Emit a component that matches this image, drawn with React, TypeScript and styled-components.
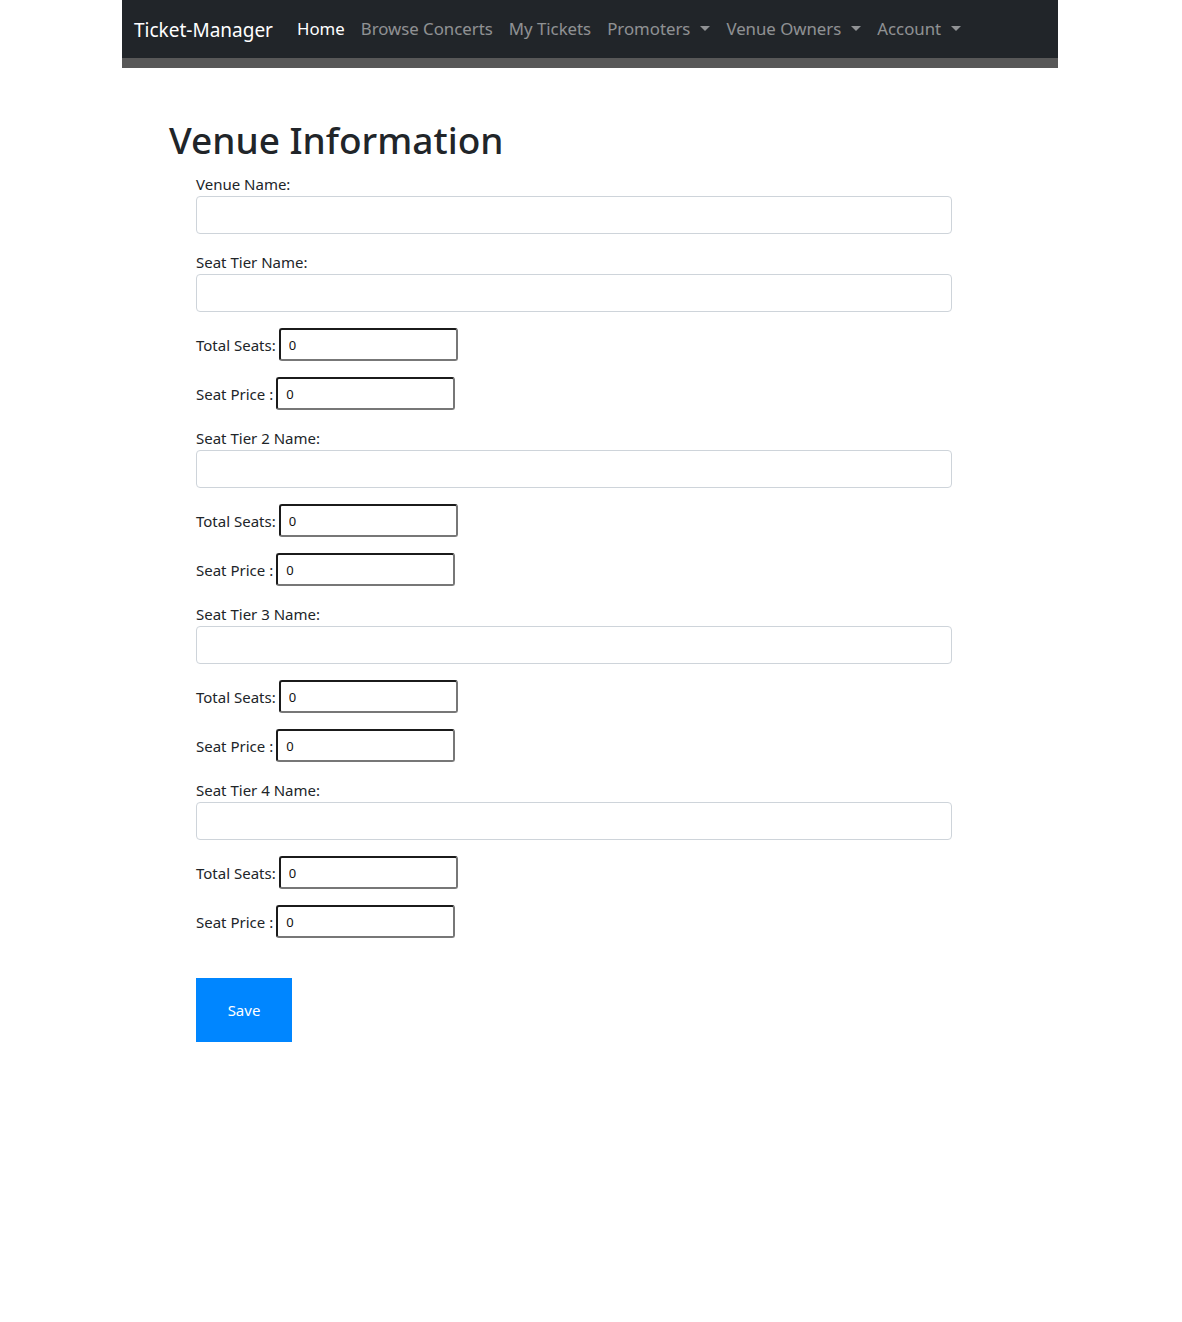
import React from "react";
import styled, { createGlobalStyle } from "styled-components";

const GlobalStyle = createGlobalStyle`
  html, body {
    margin: 0;
    padding: 0;
    background: #fff;
  }
  body {
    font-family: "Noto Sans", "Open Sans", sans-serif;
    color: #212529;
  }
`;

const Page = styled.div`
  width: 936px;
  margin-left: 122px;
  min-height: 1322px;
`;

const Navbar = styled.nav`
  background-color: #212529;
  height: 58px;
  display: flex;
  align-items: center;
  padding: 0 12px;
  border-bottom: 10px solid #585858;
`;

const Brand = styled.a`
  color: #fff;
  font-size: 19px;
  margin-right: 24px;
  text-decoration: none;
  padding-top: 2px;
`;

const NavList = styled.ul`
  display: flex;
  list-style: none;
  margin: 0 0 2px;
  padding: 0;
  gap: 16px;
`;

const NavLink = styled.a<{ active?: boolean; dropdown?: boolean }>`
  font-size: 16.8px;
  color: ${(p) => (p.active ? "#fff" : "rgba(255, 255, 255, 0.5)")};
  text-decoration: none;
  cursor: pointer;

  &::after {
    display: ${(p) => (p.dropdown ? "inline-block" : "none")};
    content: "";
    margin-left: 10px;
    vertical-align: 4px;
    border-top: 5px solid;
    border-left: 5px solid transparent;
    border-right: 5px solid transparent;
  }
`;

const Main = styled.main`
  padding: 48px 0 0 47px;
`;

const Title = styled.h1`
  font-size: 37px;
  font-weight: 500;
  line-height: 48px;
  margin: 0 0 8px;
`;

const Form = styled.form`
  padding-left: 27px;
  width: 756px;
`;

const Group = styled.div`
  margin-bottom: 16px;
`;

const Label = styled.label`
  display: block;
  font-size: 15px;
  line-height: 24px;
`;

const TextInput = styled.input`
  display: block;
  box-sizing: border-box;
  width: 100%;
  height: 38px;
  border: 1px solid #ced4da;
  border-radius: 4px;
  padding: 6px 12px;
  font-size: 16px;
  font-family: inherit;
`;

const InlineRow = styled.div`
  display: flex;
  align-items: center;
  margin-bottom: 16px;
`;

const InlineLabel = styled.label`
  font-size: 15px;
  line-height: 24px;
  margin-right: 3px;
`;

const NumberInput = styled.input`
  box-sizing: border-box;
  width: 179px;
  height: 33px;
  border: 2px solid;
  border-color: #1b1b1b #777 #777 #1b1b1b;
  border-radius: 3px;
  padding: 0 8px;
  font-size: 13px;
  font-family: inherit;
  color: #111;
`;

const SaveButton = styled.button`
  margin-top: 24px;
  width: 96px;
  height: 64px;
  border: none;
  background-color: #0086ff;
  color: #fff;
  font-size: 15px;
  font-family: inherit;
  cursor: pointer;
`;

const tiers = ["Seat Tier Name:", "Seat Tier 2 Name:", "Seat Tier 3 Name:", "Seat Tier 4 Name:"];

function App() {
  return (
    <>
      <GlobalStyle />
      <Page>
        <Navbar>
          <Brand>Ticket-Manager</Brand>
          <NavList>
            <li><NavLink active>Home</NavLink></li>
            <li><NavLink>Browse Concerts</NavLink></li>
            <li><NavLink>My Tickets</NavLink></li>
            <li><NavLink dropdown>Promoters</NavLink></li>
            <li><NavLink dropdown>Venue Owners</NavLink></li>
            <li><NavLink dropdown>Account</NavLink></li>
          </NavList>
        </Navbar>
        <Main>
          <Title>Venue Information</Title>
          <Form onSubmit={(e) => e.preventDefault()}>
            <Group>
              <Label>Venue Name:</Label>
              <TextInput type="text" />
            </Group>
            {tiers.map((tier) => (
              <React.Fragment key={tier}>
                <Group>
                  <Label>{tier}</Label>
                  <TextInput type="text" />
                </Group>
                <InlineRow>
                  <InlineLabel>Total Seats:</InlineLabel>
                  <NumberInput type="text" defaultValue="0" />
                </InlineRow>
                <InlineRow>
                  <InlineLabel>Seat Price :</InlineLabel>
                  <NumberInput type="text" defaultValue="0" />
                </InlineRow>
              </React.Fragment>
            ))}
            <SaveButton type="submit">Save</SaveButton>
          </Form>
        </Main>
      </Page>
    </>
  );
}

export default App;
